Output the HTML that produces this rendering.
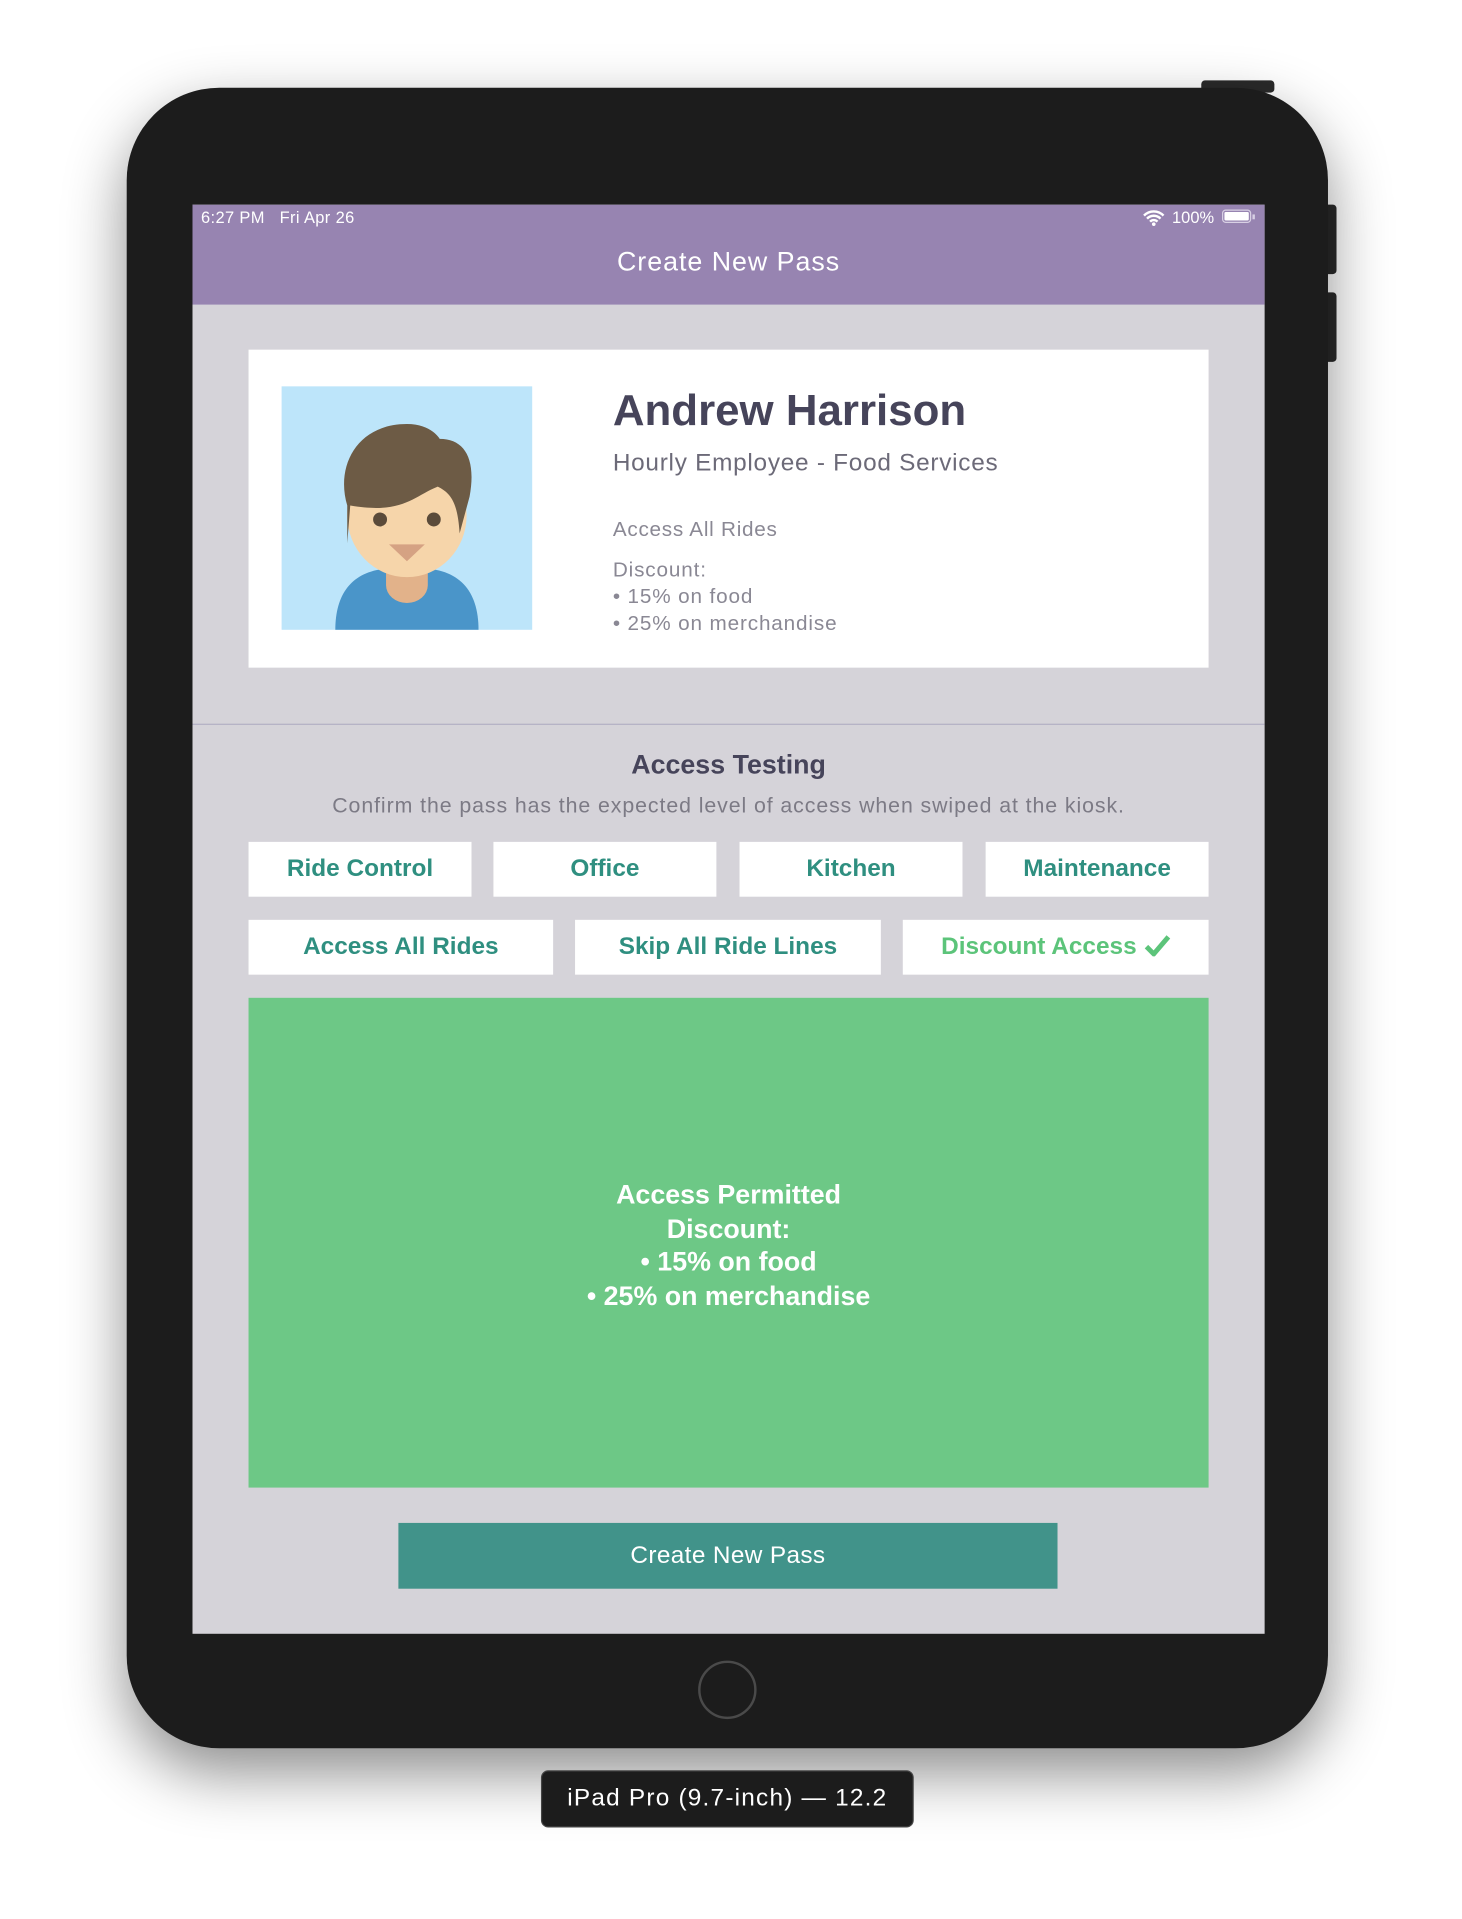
<!DOCTYPE html>
<html><head><meta charset="utf-8"><style>
html,body{margin:0;padding:0;background:#fff;width:1462px;height:1918px;overflow:hidden}
#w{position:absolute;left:0;top:0;width:1200px;height:1575px;transform:scale(1.218333);transform-origin:0 0;font-family:"Liberation Sans",sans-serif}
.a{position:absolute}
.dev{left:104px;top:72px;width:986px;height:1363px;background:#1c1c1c;border-radius:76px;box-shadow:0 20px 50px rgba(0,0,0,.45)}
.screen{left:158px;top:168px;width:880px;height:1173px;background:#d5d3d9;overflow:hidden}
.btn{background:#fff;color:#2f8f80;font-weight:bold;font-size:20px;text-align:center;line-height:45px;height:45px}
.c{text-align:center;white-space:nowrap}
</style></head><body><div id="w">
<div class="a" style="left:986px;top:66px;width:60px;height:10px;background:#2a2a2a;border-radius:3px"></div>
<div class="a" style="left:1085px;top:168px;width:12px;height:57px;background:#2a2a2a;border-radius:3px"></div>
<div class="a" style="left:1085px;top:240px;width:12px;height:57px;background:#2a2a2a;border-radius:3px"></div>
<div class="a dev"></div>
<div class="a screen">
 <div class="a" style="left:0;top:0;width:880px;height:82px;background:#9784b1"></div>
 <div class="a" style="left:7px;top:3px;color:#fff;font-size:13.5px;letter-spacing:.3px">6:27 PM&nbsp;&nbsp;&nbsp;Fri Apr 26</div>
 <svg class="a" style="left:780px;top:4px" width="18" height="14" viewBox="0 0 18 14"><path d="M1 5a11 11 0 0 1 16 0M3.5 7.5a7.5 7.5 0 0 1 11 0M6 10a4 4 0 0 1 6 0" stroke="#fff" stroke-width="2" fill="none"/><circle cx="9" cy="12" r="1.5" fill="#fff"/></svg>
 <div class="a" style="left:804px;top:3px;color:#fff;font-size:13.5px">100%</div>
 <div class="a" style="left:845px;top:4px;width:24px;height:11px;border:1px solid #d8d0e4;border-radius:3px;box-sizing:border-box;padding:1px"><div style="background:#fff;width:100%;height:100%;border-radius:1px"></div></div>
 <div class="a" style="left:870px;top:8px;width:2px;height:4px;background:#d8d0e4"></div>
 <div class="a c" style="left:0;width:880px;top:34px;color:#fff;font-size:22px;letter-spacing:.8px">Create New Pass</div>

 <div class="a" style="left:46px;top:119px;width:788px;height:261px;background:#fff"></div>
 <svg class="a" style="left:73px;top:149px" width="206" height="200" viewBox="0 0 252 245">
  <rect width="252" height="245" fill="#bde5fa"/>
  <path d="M54 245c0-40 20-62 60-62h24c40 0 60 22 60 62z" fill="#4a95c9"/>
  <path d="M105 170h42v30a21 18 0 0 1-42 0z" fill="#e2b28a"/>
  <ellipse cx="126" cy="130" rx="60" ry="62" fill="#f6d5aa"/>
  <path d="M66 120c-12-40 10-82 60-82 25 0 33 15 33 15 25 0 37 20 30 58l-10 37c-2-30-8-40-22-47-25 10-35 28-88 19l-3 38z" fill="#6d5b45"/>
  <circle cx="99" cy="134" r="7" fill="#5b4b3a"/><circle cx="153" cy="134" r="7" fill="#5b4b3a"/>
  <path d="M108 159h36l-18 17z" fill="#d5a283"/>
 </svg>
 <div class="a" style="left:345px;top:148px;color:#46445a;font-size:36px;font-weight:bold">Andrew Harrison</div>
 <div class="a" style="left:345px;top:201px;color:#6c6a78;font-size:20px;letter-spacing:.6px">Hourly Employee - Food Services</div>
 <div class="a" style="left:345px;top:257px;color:#8a8894;font-size:17px;letter-spacing:.6px">Access All Rides</div>
 <div class="a" style="left:345px;top:289px;color:#8a8894;font-size:17px;line-height:22px;letter-spacing:.7px">Discount:<br>• 15% on food<br>• 25% on merchandise</div>

 <div class="a" style="left:0;top:426px;width:880px;height:1px;background:#b3b0c4"></div>
 <div class="a c" style="left:0;width:880px;top:447px;color:#46445a;font-size:22px;font-weight:bold">Access Testing</div>
 <div class="a c" style="left:0;width:880px;top:483px;color:#7c7a85;font-size:17.5px;letter-spacing:.75px">Confirm the pass has the expected level of access when swiped at the kiosk.</div>

 <div class="a btn" style="left:46px;top:523px;width:183px">Ride Control</div>
 <div class="a btn" style="left:247px;top:523px;width:183px">Office</div>
 <div class="a btn" style="left:449px;top:523px;width:183px">Kitchen</div>
 <div class="a btn" style="left:651px;top:523px;width:183px">Maintenance</div>
 <div class="a btn" style="left:46px;top:587px;width:250px">Access All Rides</div>
 <div class="a btn" style="left:314px;top:587px;width:251px">Skip All Ride Lines</div>
 <div class="a btn" style="left:583px;top:587px;width:251px;color:#5cc47a">Discount Access <svg width="22" height="18" viewBox="0 0 22 18" style="vertical-align:-2px"><path d="M2 10l6 6L20 2" stroke="#5cc47a" stroke-width="4" fill="none"/></svg></div>

 <div class="a" style="left:46px;top:651px;width:788px;height:402px;background:#6dc886"></div>
 <div class="a c" style="left:46px;width:788px;top:799px;color:#fff;font-size:22px;font-weight:bold;line-height:27.5px">Access Permitted<br>Discount:<br>• 15% on food<br>• 25% on merchandise</div>

 <div class="a c" style="left:169px;top:1082px;width:541px;height:54px;line-height:54px;background:#41938a;color:#fff;font-size:20px;letter-spacing:.3px">Create New Pass</div>
</div>
<div class="a" style="left:573px;top:1363px;width:44px;height:44px;border:2px solid #4a4a4a;border-radius:50%"></div>
<div class="a c" style="left:445px;top:1454px;width:304px;height:45px;line-height:45px;background:#1c1c1c;border-radius:5px;color:#fff;font-size:20px;letter-spacing:1px;box-shadow:0 0 0 1px #444">iPad Pro (9.7-inch) — 12.2</div>
</div></body></html>
